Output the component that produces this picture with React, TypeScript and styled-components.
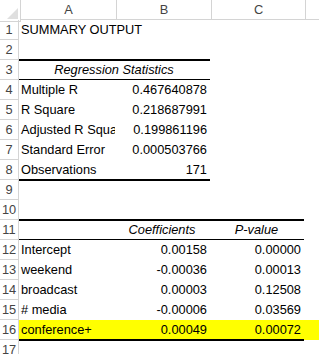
import styled, { createGlobalStyle } from 'styled-components'

const GlobalStyle = createGlobalStyle`
  html, body {
    margin: 0;
    padding: 0;
    background: #ffffff;
  }
  body {
    font-family: 'Liberation Sans', Arial, sans-serif;
    overflow: hidden;
  }
`

type Align = 'left' | 'right' | 'center'

interface CellData {
  text?: string
  align?: Align
  italic?: boolean
  spill?: boolean
  span?: number
  bt?: number
  bb?: number
}

interface RowData {
  cells: CellData[]
  fill?: string
}

const COLS = [96, 95, 94]
const LETTERS = ['A', 'B', 'C']

const Sheet = styled.div`
  width: 319px;
  height: 354px;
  overflow: hidden;
  font-size: 12.8px;
  color: #000000;
`

const HeaderRow = styled.div`
  display: flex;
  height: 20px;
`

const Corner = styled.div`
  width: 18px;
  height: 19px;
  border-right: 1px solid #d4d4d4;
  border-bottom: 1px solid #d4d4d4;
  display: flex;
  align-items: flex-end;
  justify-content: flex-end;
  padding: 0 2px 2px 0;
  box-sizing: content-box;
  flex-shrink: 0;
`

const ColHead = styled.div<{ $w?: number }>`
  width: ${(p) => (p.$w ? `${p.$w - 1}px` : 'auto')};
  flex: ${(p) => (p.$w ? '0 0 auto' : '1')};
  height: 19px;
  line-height: 19px;
  text-align: center;
  color: #444444;
  border-bottom: 1px solid #d4d4d4;
  border-right: ${(p) => (p.$w ? '1px solid #d4d4d4' : 'none')};
`

const Row = styled.div`
  display: flex;
  height: 20px;
`

const RowNum = styled.div`
  width: 18px;
  height: 19px;
  line-height: 20px;
  text-align: center;
  color: #444444;
  border-right: 1px solid #d4d4d4;
  border-bottom: 1px solid #d4d4d4;
  flex-shrink: 0;
`

const Cell = styled.div<{
  $w?: number
  $align: Align
  $italic?: boolean
  $spill?: boolean
  $bt: number
  $bb: number
  $fill?: string
}>`
  width: ${(p) => (p.$w ? `${p.$w}px` : 'auto')};
  flex: ${(p) => (p.$w ? '0 0 auto' : '1')};
  height: 20px;
  line-height: 20px;
  box-sizing: border-box;
  padding: 0 3px 0 2px;
  white-space: nowrap;
  overflow: ${(p) => (p.$spill ? 'visible' : 'hidden')};
  text-align: ${(p) => p.$align};
  font-style: ${(p) => (p.$italic ? 'italic' : 'normal')};
  background: ${(p) => p.$fill ?? 'transparent'};
  box-shadow: ${(p) => {
    const parts: string[] = []
    if (p.$bt) parts.push(`inset 0 ${p.$bt}px 0 #000`)
    if (p.$bb) parts.push(`inset 0 -${p.$bb}px 0 #000`)
    return parts.length ? parts.join(', ') : 'none'
  }};
  position: relative;
  z-index: ${(p) => (p.$spill ? 1 : 0)};
`

const num = (text: string): CellData => ({ text, align: 'right' })

const rows: RowData[] = [
  { cells: [{ text: 'SUMMARY OUTPUT', spill: true }, {}, {}] },
  { cells: [{ bb: 1 }, { bb: 1 }, {}] },
  {
    cells: [
      { text: 'Regression Statistics', italic: true, align: 'center', span: 2, bt: 1, bb: 1 },
      {},
    ],
  },
  { cells: [{ text: 'Multiple R' }, num('0.467640878'), {}] },
  { cells: [{ text: 'R Square' }, num('0.218687991'), {}] },
  { cells: [{ text: 'Adjusted R Square' }, num('0.199861196'), {}] },
  { cells: [{ text: 'Standard Error' }, num('0.000503766'), {}] },
  { cells: [{ text: 'Observations', bb: 1 }, { ...num('171'), bb: 1 }, {}] },
  { cells: [{ bt: 1 }, { bt: 1 }, {}] },
  { cells: [{ bb: 1 }, { bb: 1 }, { bb: 1 }] },
  {
    cells: [
      { bt: 1, bb: 1 },
      { text: 'Coefficients', italic: true, align: 'center', bt: 1, bb: 1 },
      { text: 'P-value', italic: true, align: 'center', bt: 1, bb: 1 },
    ],
  },
  { cells: [{ text: 'Intercept' }, num('0.00158'), num('0.00000')] },
  { cells: [{ text: 'weekend' }, num('-0.00036'), num('0.00013')] },
  { cells: [{ text: 'broadcast' }, num('0.00003'), num('0.12508')] },
  { cells: [{ text: '# media' }, num('-0.00006'), num('0.03569')] },
  {
    fill: '#ffff00',
    cells: [
      { text: 'conference+', bb: 1 },
      { ...num('0.00049'), bb: 1 },
      { ...num('0.00072'), bb: 1 },
    ],
  },
  { cells: [{ bt: 1 }, { bt: 1 }, { bt: 1 }] },
]

const CornerMark = () => (
  <svg width="11" height="11" viewBox="0 0 11 11">
    <polygon points="11,0 11,11 0,11" fill="#dfdfdf" />
  </svg>
)

const App = () => {
  return (
    <Sheet>
      <GlobalStyle />
      <HeaderRow>
        <Corner>
          <CornerMark />
        </Corner>
        {LETTERS.map((l, i) => (
          <ColHead key={l} $w={COLS[i]}>
            {l}
          </ColHead>
        ))}
        <ColHead />
      </HeaderRow>
      {rows.map((row, r) => {
        let col = 0
        return (
          <Row key={r}>
            <RowNum>{r + 1}</RowNum>
            {row.cells.map((c, i) => {
              const span = c.span ?? 1
              const w = COLS.slice(col, col + span).reduce((a, b) => a + b, 0)
              col += span
              if (col > COLS.length) return null
              return (
                <Cell
                  key={i}
                  $w={w}
                  $align={c.align ?? 'left'}
                  $italic={c.italic}
                  $spill={c.spill}
                  $bt={c.bt ?? 0}
                  $bb={c.bb ?? 0}
                  $fill={row.fill}
                >
                  {c.text}
                </Cell>
              )
            })}
            <Cell $align="left" $bt={0} $bb={0} $fill={row.fill} />
          </Row>
        )
      })}
    </Sheet>
  )
}

export default App
